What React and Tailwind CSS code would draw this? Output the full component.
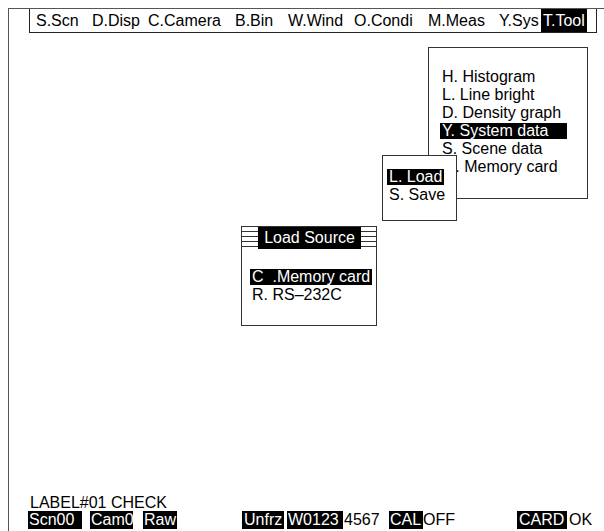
import React from 'react';

const menu = [
  { label: 'S.Scn', w: 'w-[56px]' },
  { label: 'D.Disp', w: 'w-[56px]' },
  { label: 'C.Camera', w: 'w-[87px]' },
  { label: 'B.Bin', w: 'w-[53px]' },
  { label: 'W.Wind', w: 'w-[66px]' },
  { label: 'O.Condi', w: 'w-[74px]' },
  { label: 'M.Meas', w: 'w-[71px]' },
  { label: 'Y.Sys', w: 'w-[42px]' },
];

const toolItems = [
  'H. Histogram',
  'L. Line bright',
  'D. Density graph',
  'Y. System data',
  'S. Scene data',
  'M. Memory card',
];

function Row({ text, active, wide }) {
  return (
    <div className="h-[18px] flex items-center">
      <span
        className={`inline-block px-[2px] leading-[16px] whitespace-pre ${active ? 'bg-black text-white' : ''} ${wide ? 'w-[127px]' : ''}`}
      >
        {text}
      </span>
    </div>
  );
}

function Stripes({ w }) {
  return (
    <div className={`${w} flex flex-col gap-[4px] pt-[4px]`}>
      <div className="h-px bg-[#333]" />
      <div className="h-px bg-[#333]" />
      <div className="h-px bg-[#333]" />
      <div className="h-px bg-[#333]" />
    </div>
  );
}

export default function App() {
  return (
    <div className="relative w-[604px] h-[531px] overflow-hidden bg-white pt-2 pl-2 text-[16px] text-black font-['Liberation_Sans',Arial,sans-serif]">
      {/* screen frame */}
      <div className="h-full flex flex-col border-l border-t border-[#555]">
        {/* top menu bar */}
        <div className="ml-[20px] w-[568px] h-[24px] flex border-l border-r border-b border-[#222] pl-[6px]">
          {menu.map((m) => (
            <span key={m.label} className={`${m.w} leading-[23px] whitespace-nowrap`}>
              {m.label}
            </span>
          ))}
          <span className="w-[46px] bg-black text-white leading-[23px] pl-[2px] whitespace-nowrap">T.Tool</span>
        </div>

        <div className="flex-1" />

        {/* status */}
        <div className="ml-[21px] leading-[16px]">LABEL#01 CHECK</div>
        <div className="flex h-[18px] mb-[2px] leading-[18px] whitespace-nowrap">
          <span className="ml-[19px] w-[54px] bg-black text-white pl-[1px]">Scn00</span>
          <span className="ml-[8px] w-[43px] bg-black text-white pl-[1px]">Cam0</span>
          <span className="ml-[10px] w-[34px] bg-black text-white pl-[1px]">Raw</span>
          <span className="ml-[65px] w-[42px] bg-black text-white pl-[2px]">Unfrz</span>
          <span className="ml-[3px] w-[56px] bg-black text-white pl-[1px]">W0123</span>
          <span className="ml-[1px] w-[45px]">4567</span>
          <span className="w-[34px] bg-black text-white pl-[1px]">CAL</span>
          <span className="w-[94px]">OFF</span>
          <span className="w-[50px] bg-black text-white pl-[2px]">CARD</span>
          <span className="ml-[2px]">OK</span>
        </div>
      </div>

      {/* Tool dropdown */}
      <div className="absolute left-[428px] top-[47px] w-[160px] h-[152px] border border-[#333] bg-white pt-[20px] pl-[11px]">
        {toolItems.map((t) => (
          <Row key={t} text={t} active={t === 'Y. System data'} wide={t === 'Y. System data'} />
        ))}
      </div>

      {/* Load / Save */}
      <div className="absolute left-[382px] top-[155px] w-[75px] h-[66px] border border-[#333] bg-white pt-[12px] pl-[4px]">
        <Row text="L. Load" active />
        <Row text="S. Save" />
      </div>

      {/* Load Source dialog */}
      <div className="absolute left-[241px] top-[226px] w-[136px] h-[100px] border border-[#333] bg-white">
        <div className="flex h-[22px]">
          <Stripes w="w-[16px]" />
          <div className="flex-1 bg-black text-white text-center leading-[22px]">Load Source</div>
          <Stripes w="w-[15px]" />
        </div>
        <div className="pt-[19px] pl-[8px]">
          <Row text="C  .Memory card" active />
          <Row text="R. RS–232C" />
        </div>
      </div>
    </div>
  );
}
